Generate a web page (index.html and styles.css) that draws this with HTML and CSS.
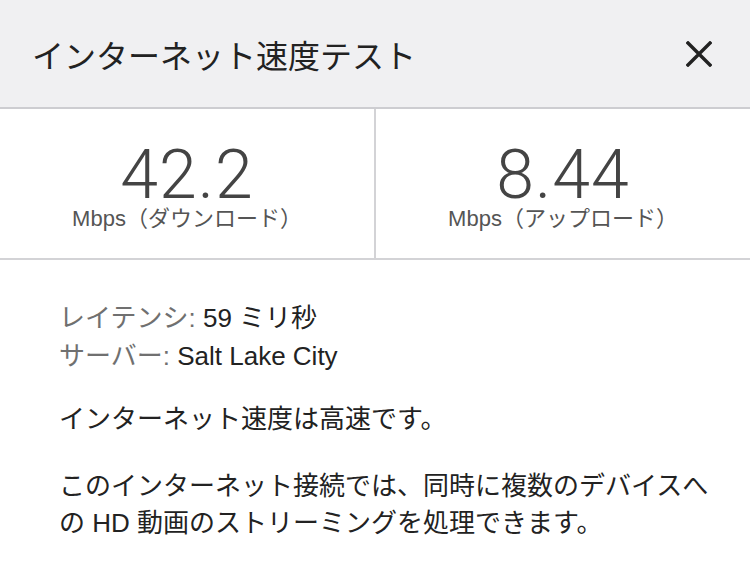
FILE: index.html
```html
<!DOCTYPE html>
<html lang="ja">
<head>
<meta charset="utf-8">
<title>インターネット速度テスト</title>
<link rel="stylesheet" href="styles.css">
</head>
<body>
<div class="panel">
  <header class="header">
    <h1 class="title">インターネット速度テスト</h1>
    <button class="close" aria-label="閉じる">
      <svg width="26" height="26" viewBox="0 0 26 26">
        <path d="M2 2 L24 24 M24 2 L2 24" stroke="#222" stroke-width="3.4" stroke-linecap="square" fill="none"/>
      </svg>
    </button>
  </header>
  <section class="stats">
    <div class="stat stat-left">
      <div class="stat-value">42.2</div>
      <div class="stat-label">Mbps（ダウンロード）</div>
    </div>
    <div class="stat">
      <div class="stat-value">8.44</div>
      <div class="stat-label">Mbps（アップロード）</div>
    </div>
  </section>
  <section class="details">
    <div class="info">
      <div class="info-row"><span class="info-key">レイテンシ:</span> <span class="info-val">59 ミリ秒</span></div>
      <div class="info-row"><span class="info-key">サーバー:</span> <span class="info-val">Salt Lake City</span></div>
    </div>
    <p class="summary">インターネット速度は高速です。</p>
    <p class="desc">このインターネット接続では、同時に複数のデバイスへの HD 動画のストリーミングを処理できます。</p>
  </section>
</div>
</body>
</html>
```

FILE: styles.css
```css
* { box-sizing: border-box; }
html, body { margin: 0; padding: 0; background: #fff; }
body {
  font-family: "Liberation Sans", "Noto Sans CJK JP", sans-serif;
  color: #222;
  width: 750px;
  height: 563px;
  overflow: hidden;
}
.header {
  height: 109px;
  background: #f0f0f2;
  border-bottom: 2px solid #cdcdd1;
  display: flex;
  align-items: center;
  justify-content: space-between;
  padding: 0 38px 0 32px;
}
.title {
  margin: 0;
  font-family: "Noto Sans CJK JP", sans-serif;
  font-weight: 400;
  font-size: 32px;
  line-height: 40px;
  color: #222;
}
.close {
  border: 0;
  background: none;
  padding: 0;
  width: 26px;
  height: 26px;
  display: block;
}
.close svg { display: block; }
.stats {
  display: grid;
  grid-template-columns: 376px 1fr;
  height: 151px;
  border-bottom: 2px solid #d3d3d6;
}
.stat {
  display: flex;
  flex-direction: column;
  align-items: center;
  padding-top: 35px;
}
.stat-left { border-right: 2px solid #d3d3d6; }
.stat-value {
  font-family: "Roboto", "Liberation Sans", sans-serif;
  font-weight: 300;
  font-size: 68px;
  line-height: 62px;
  letter-spacing: 1px;
  color: #444;
}
.stat-label {
  font-size: 22px;
  line-height: 26px;
  color: #555;
}
.details {
  padding: 39px 40px 0 59px;
  font-size: 26px;
}
.info-row { line-height: 38px; }
.info-key { color: #707070; }
.info-val { color: #222; }
.summary {
  margin: 25px 0 0;
  line-height: 38px;
}
.desc {
  margin: 30px 0 0;
  line-height: 37px;
  width: 660px;
}
```
